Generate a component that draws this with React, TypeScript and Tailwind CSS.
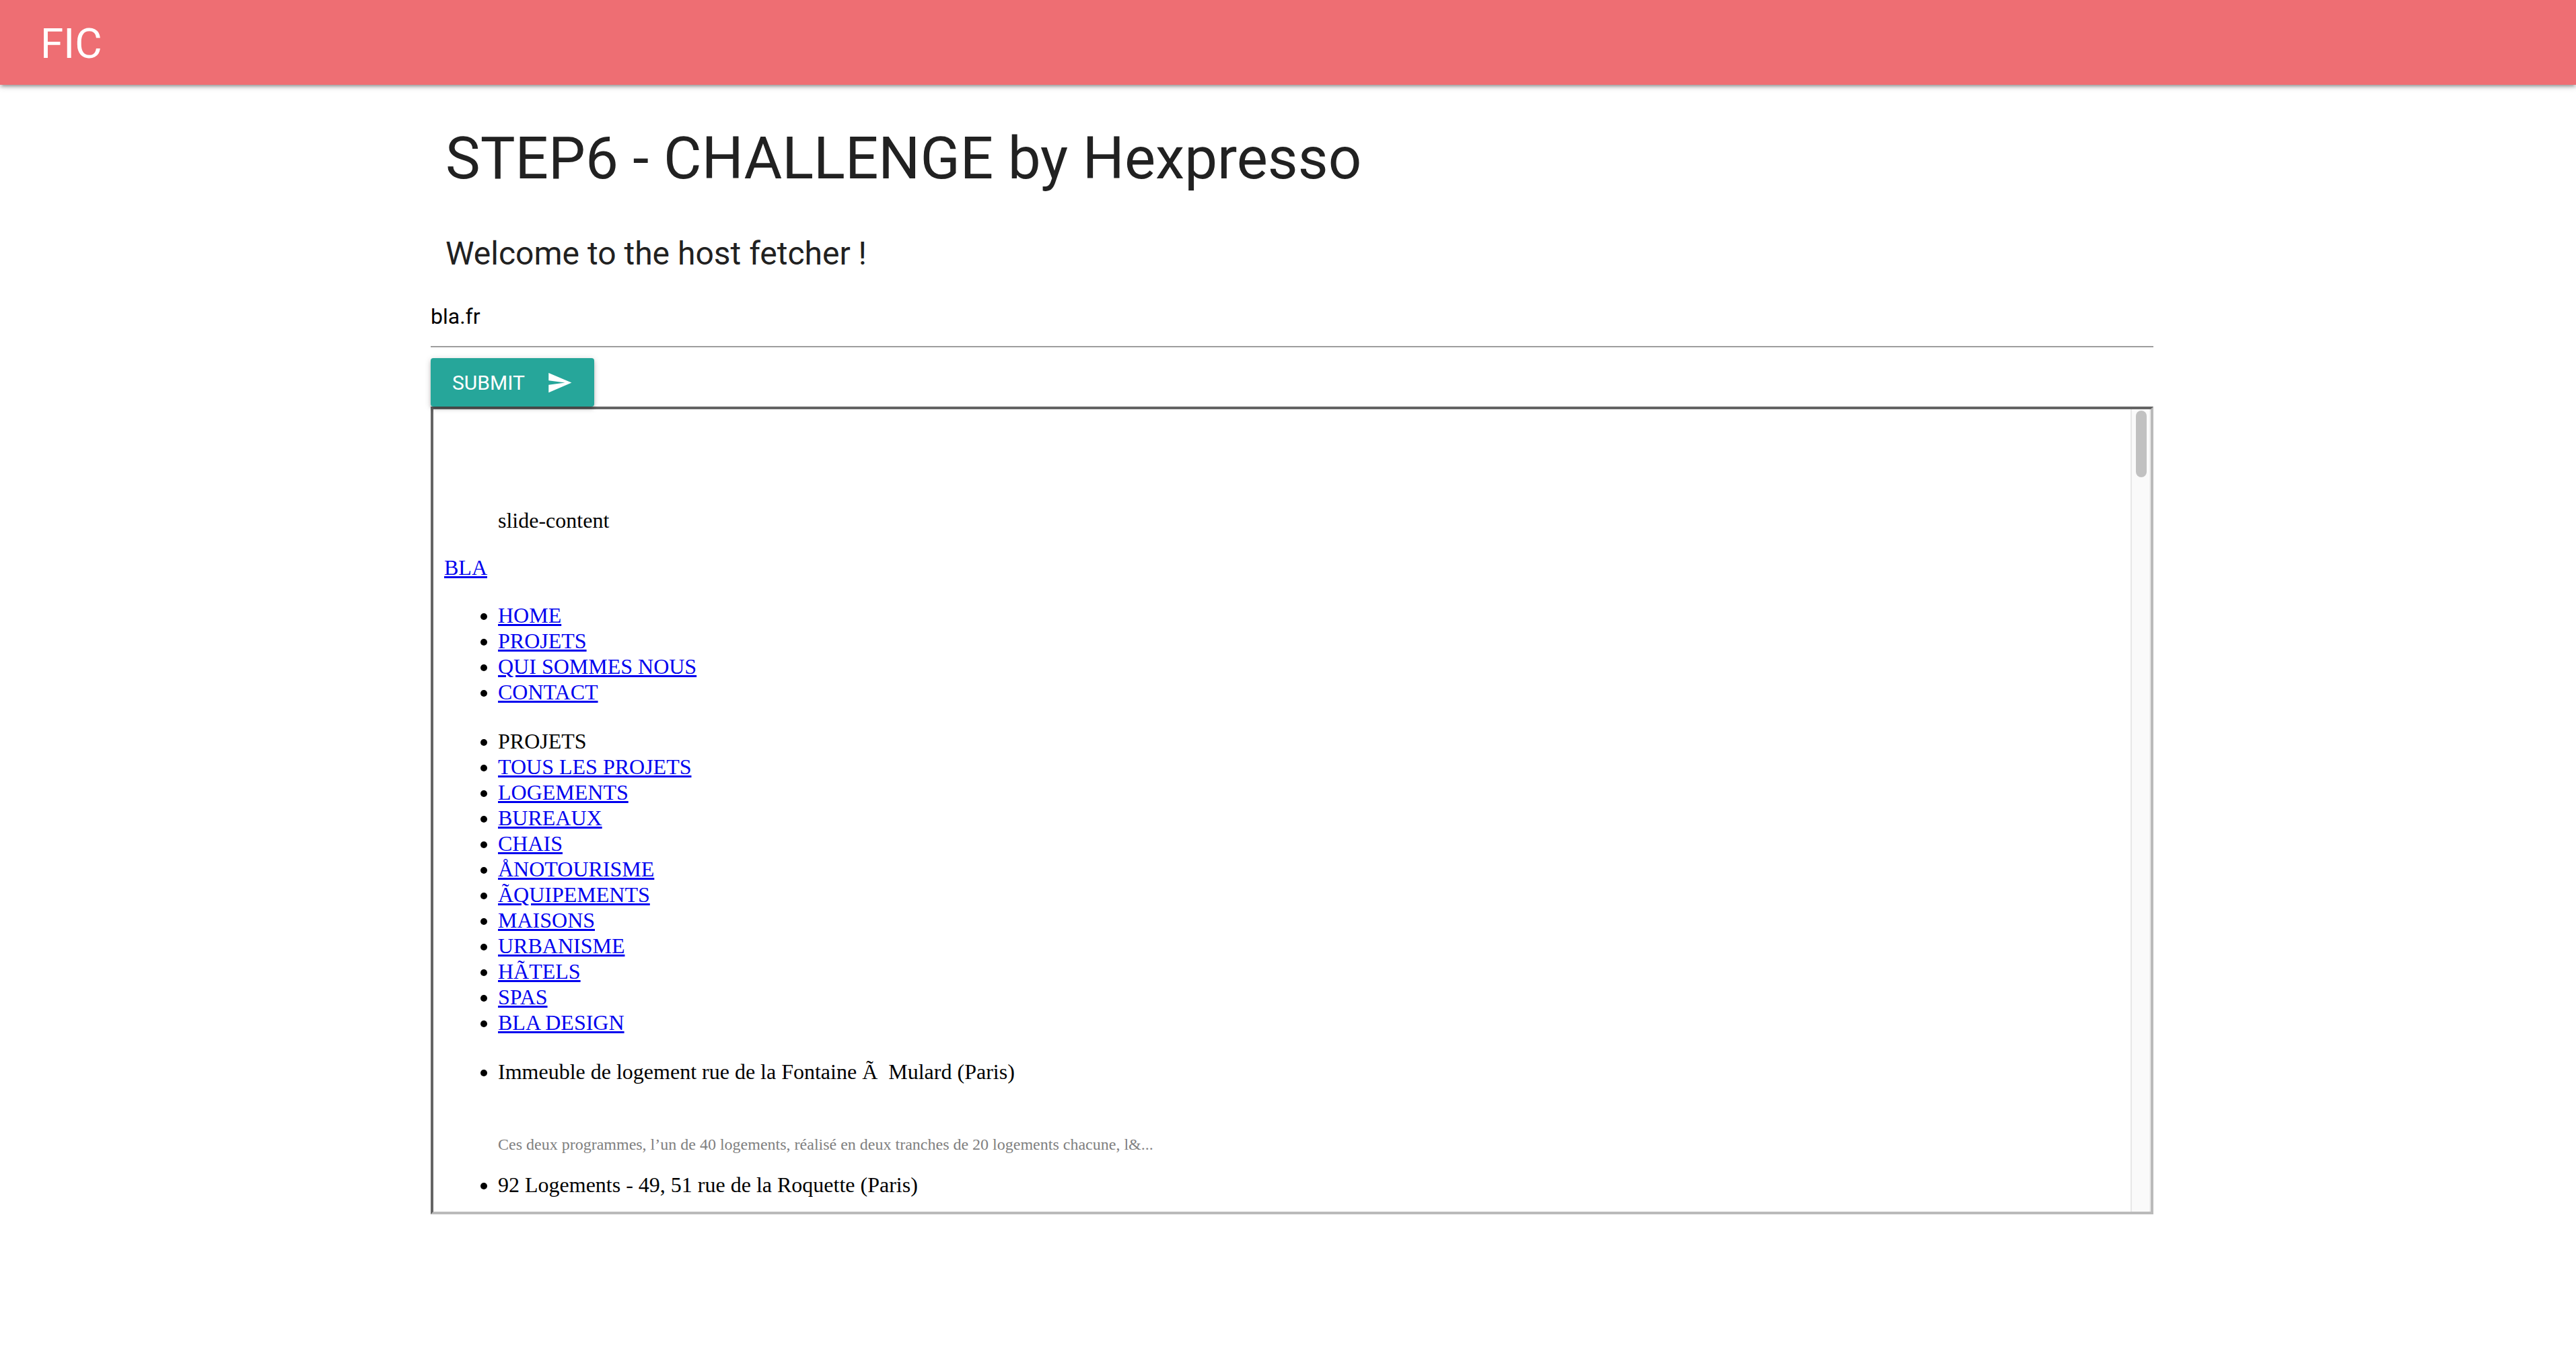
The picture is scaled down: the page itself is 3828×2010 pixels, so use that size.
import React, { useState } from "react";

const menu = ["HOME", "PROJETS", "QUI SOMMES NOUS", "CONTACT"];

const categories = [
  "TOUS LES PROJETS",
  "LOGEMENTS",
  "BUREAUX",
  "CHAIS",
  "ÅNOTOURISME",
  "ÃQUIPEMENTS",
  "MAISONS",
  "URBANISME",
  "HÃTELS",
  "SPAS",
  "BLA DESIGN",
];

function PageLink({ children }: { children: React.ReactNode }) {
  return (
    <a href="#" className="text-[#0000ee] underline">
      {children}
    </a>
  );
}

function Header() {
  return (
    <header className="relative bg-[#ee6e73] shadow-[0_4px_4px_0_rgba(0,0,0,0.14),0_6px_2px_-4px_rgba(0,0,0,0.12),0_2px_10px_0_rgba(0,0,0,0.2)]">
      <nav className="flex h-[126px] items-center px-[60px] pt-1">
        <a href="#" className="text-[62px] leading-none text-white">
          FIC
        </a>
      </nav>
    </header>
  );
}

function FetchForm() {
  const [host, setHost] = useState("bla.fr");
  return (
    <form onSubmit={(e) => e.preventDefault()} className="mt-[22px] flex flex-col items-start">
      <input
        type="text"
        aria-label="Host"
        value={host}
        onChange={(e) => setHost(e.target.value)}
        className="h-[90px] w-full border-b-2 border-[#9e9e9e] bg-transparent text-[32px] text-black outline-none"
      />
      <button
        type="submit"
        className="relative mt-4 flex h-[72px] items-center gap-8 rounded-[4px] bg-[#26a69a] px-8 text-[30px] text-white shadow-[0_4px_4px_0_rgba(0,0,0,0.14),0_6px_2px_-4px_rgba(0,0,0,0.12),0_2px_10px_0_rgba(0,0,0,0.2)]"
      >
        SUBMIT
        <svg viewBox="0 0 24 24" className="size-[39px] fill-current" aria-hidden="true">
          <path d="M2.01 21L23 12 2.01 3 2 10l15 2-15 2z" />
        </svg>
      </button>
    </form>
  );
}

function Scrollbar() {
  return (
    <div
      aria-hidden="true"
      className="flex w-[30px] shrink-0 justify-center border-x-2 border-l-[#e8e8e8] border-r-[#ededed] bg-[#fafafa] pt-0.5 pl-0.5"
    >
      <div className="h-[99px] w-4 rounded-full bg-[#c1c1c1]" />
    </div>
  );
}

function FetchedPage() {
  return (
    <section
      aria-label="Fetched page"
      className="flex h-[1200px] overflow-hidden border-4 border-t-[#646464] border-r-[#bababa] border-b-[#bababa] border-l-[#646464] font-['Liberation_Serif',serif] text-[32px] leading-[38px] text-black"
    >
      <div className="grow px-4 pt-[146px]">
        <p className="pl-20">slide-content</p>
        <p className="mt-8">
          <PageLink>BLA</PageLink>
        </p>
        <ul className="mt-[33px] list-disc pl-20">
          {menu.map((item) => (
            <li key={item}>
              <PageLink>{item}</PageLink>
            </li>
          ))}
        </ul>
        <ul className="mt-[35px] list-disc pl-20">
          <li>PROJETS</li>
          {categories.map((item) => (
            <li key={item}>
              <PageLink>{item}</PageLink>
            </li>
          ))}
        </ul>
        <ul className="mt-[35px] list-disc pl-20">
          <li>
            Immeuble de logement rue de la Fontaine Ã{"\u00a0"} Mulard (Paris)
            <p className="mt-[75px] mb-[27px] text-[24px] leading-[28px] text-[#808080]">
              Ces deux programmes, l’un de 40 logements, réalisé en deux tranches de 20 logements
              chacune, l&amp;...
            </p>
          </li>
          <li>92 Logements - 49, 51 rue de la Roquette (Paris)</li>
        </ul>
      </div>
      <Scrollbar />
    </section>
  );
}

export default function App() {
  return (
    <div className="min-h-screen bg-white font-['Roboto',sans-serif] text-[#212121]">
      <Header />
      <main className="pl-3">
        <div className="mx-auto max-w-[2560px]">
          <div className="px-[22px]">
            <h1 className="pt-[61px] text-[87px] leading-[96px]">STEP6 - CHALLENGE by Hexpresso</h1>
            <h2 className="mt-[67px] text-[48px] leading-[54px]">Welcome to the host fetcher !</h2>
          </div>
          <FetchForm />
          <FetchedPage />
        </div>
      </main>
    </div>
  );
}
